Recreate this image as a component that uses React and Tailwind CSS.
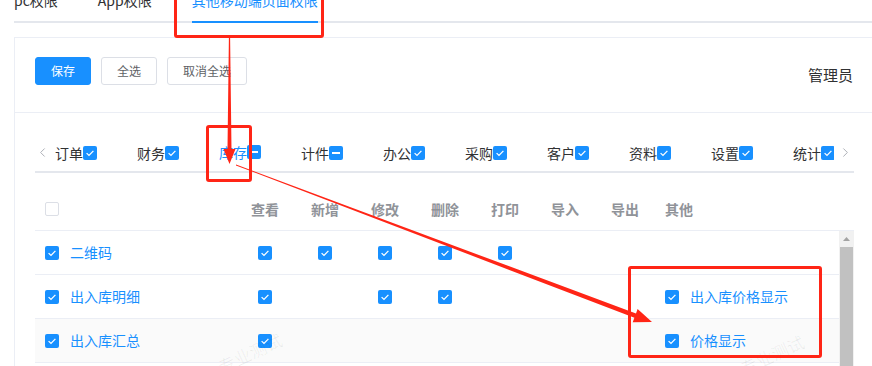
import React from 'react';
import { ChevronLeft, ChevronRight } from 'lucide-react';

const TOP_TABS = ['pc权限', 'App权限', '其他移动端页面权限'];

const MODULES = [
  { name: '订单', state: 'on' },
  { name: '财务', state: 'on' },
  { name: '库存', state: 'half', active: true },
  { name: '计件', state: 'half' },
  { name: '办公', state: 'on' },
  { name: '采购', state: 'on' },
  { name: '客户', state: 'on' },
  { name: '资料', state: 'on' },
  { name: '设置', state: 'on' },
  { name: '统计', state: 'on' },
];

const COLUMNS = ['查看', '新增', '修改', '删除', '打印', '导入', '导出'];

const ROWS = [
  { name: '二维码', perms: [1, 1, 1, 1, 1, 0, 0], extra: null },
  { name: '出入库明细', perms: [1, 0, 1, 1, 0, 0, 0], extra: '出入库价格显示' },
  { name: '出入库汇总', perms: [1, 0, 0, 0, 0, 0, 0], extra: '价格显示', striped: true },
];

function Checkbox({ state = 'on' }) {
  if (state === 'off') {
    return <span className="block w-[14px] h-[14px] rounded-[2px] border border-[#dcdfe6] bg-white shrink-0" />;
  }
  return (
    <span className="flex w-[14px] h-[14px] rounded-[2px] bg-[#1890ff] shrink-0 items-center justify-center">
      {state === 'half' ? (
        <span className="block w-[8px] h-[2px] bg-white" />
      ) : (
        <svg width="14" height="14" viewBox="0 0 14 14">
          <path d="M3.6 7.1 L6 9.4 L10.4 4.9" fill="none" stroke="white" strokeWidth="1.3" />
        </svg>
      )}
    </span>
  );
}

// tapered annotation arrow
function arrowPoints(x1, y1, x2, y2, w0, w1, hl, hw) {
  const dx = x2 - x1, dy = y2 - y1;
  const len = Math.hypot(dx, dy);
  const ux = dx / len, uy = dy / len;
  const px = -uy, py = ux;
  const bx = x2 - ux * hl, by = y2 - uy * hl;
  const pts = [
    [x1 + (px * w0) / 2, y1 + (py * w0) / 2],
    [bx + (px * w1) / 2, by + (py * w1) / 2],
    [bx + (px * hw) / 2, by + (py * hw) / 2],
    [x2, y2],
    [bx - (px * hw) / 2, by - (py * hw) / 2],
    [bx - (px * w1) / 2, by - (py * w1) / 2],
    [x1 - (px * w0) / 2, y1 - (py * w0) / 2],
  ];
  return pts.map((p) => p.map((v) => v.toFixed(1)).join(',')).join(' ');
}

export default function App() {
  return (
    <div className="relative w-[872px] h-[366px] overflow-hidden bg-white font-['Noto_Sans_CJK_SC','Noto_Sans',sans-serif]">
      {/* top tabs */}
      <div className="ml-[14px] -mt-[17px] h-[40px] flex border-b-2 border-[#e4e7ed]">
        {TOP_TABS.map((t, i) => (
          <div
            key={t}
            className={`h-[40px] leading-[35px] text-[14px] ${i === 0 ? 'pr-5' : 'px-5'} ${i === 2 ? 'text-[#1890ff]' : 'text-[#303133]'}`}
          >
            <span className={`inline-block h-[40px] ${i === 2 ? 'border-b-2 border-[#1890ff]' : ''}`}>{t}</span>
          </div>
        ))}
      </div>

      {/* card */}
      <div className="ml-[14px] mt-[14px] w-[861px] border border-[#ebeef5] bg-white">
        <div className="h-[75px] px-5 flex justify-between border-b border-[#ebeef5]">
          <div className="flex gap-[10px] mt-[19px] self-start">
            <button className="px-[15px] h-[28px] text-[12px] rounded-[3px] bg-[#1890ff] text-white border border-[#1890ff]">保存</button>
            <button className="px-[15px] h-[28px] text-[12px] rounded-[3px] bg-white text-[#606266] border border-[#dcdfe6]">全选</button>
            <button className="px-[15px] h-[28px] text-[12px] rounded-[3px] bg-white text-[#606266] border border-[#dcdfe6]">取消全选</button>
          </div>
          <div className="self-center text-[15px] text-[#303133] mr-[1px]">管理员</div>
        </div>

        <div className="pt-5 px-5">
          {/* module tabs */}
          <div className="h-[40px] flex border-b-2 border-[#e4e7ed]">
            <div className="w-[20px] flex items-center text-[#a8abb2]">
              <ChevronLeft size={15} strokeWidth={1.5} />
            </div>
            <div className="flex-1 flex overflow-hidden">
              {MODULES.map((m, i) => (
                <div key={m.name} className={`shrink-0 ${i === 0 ? 'pr-5' : 'px-5'}`}>
                  <div
                    className={`h-[40px] flex items-center ${m.active ? 'border-b-2 border-[#1890ff] text-[#1890ff]' : 'text-[#303133]'}`}
                  >
                    <span className="text-[14px]">{m.name}</span>
                    <Checkbox state={m.state} />
                  </div>
                </div>
              ))}
            </div>
            <div className="w-[20px] flex items-center justify-end text-[#a8abb2]">
              <ChevronRight size={15} strokeWidth={1.5} className="mr-[1px]" />
            </div>
          </div>

          {/* table */}
          <div className="mt-[15px]">
            <div className="h-[43px] grid grid-cols-[200px_60px_60px_60px_60px_60px_60px_60px_1fr] items-center border-b border-[#ebeef5] text-[14px] font-bold text-[#909399]">
              <div className="pl-[10px]">
                <Checkbox state="off" />
              </div>
              {COLUMNS.map((c) => (
                <div key={c} className="text-center">{c}</div>
              ))}
              <div className="pl-[10px]">其他</div>
            </div>

            <div className="flex">
              <div className="flex-1">
                {ROWS.map((r) => (
                  <div
                    key={r.name}
                    className={`h-[44px] grid grid-cols-[200px_60px_60px_60px_60px_60px_60px_60px_1fr] items-center border-b border-[#ebeef5] text-[14px] ${r.striped ? 'bg-[#fafafa]' : ''}`}
                  >
                    <div className="pl-[10px] flex items-center gap-[11px]">
                      <Checkbox />
                      <span className="text-[#1890ff]">{r.name}</span>
                    </div>
                    {r.perms.map((p, i) => (
                      <div key={i} className="flex justify-center">
                        {p ? <Checkbox /> : null}
                      </div>
                    ))}
                    <div className="pl-[10px] flex items-center gap-[11px]">
                      {r.extra && (
                        <>
                          <Checkbox />
                          <span className="text-[#1890ff]">{r.extra}</span>
                        </>
                      )}
                    </div>
                  </div>
                ))}
              </div>
              {/* scrollbar */}
              <div className="w-[15px] h-[140px] bg-[#f1f1f1] flex flex-col items-center">
                <svg width="15" height="16" viewBox="0 0 15 16" className="shrink-0">
                  <path d="M4 10 L7.5 6 L11 10 Z" fill="#a3a3a3" />
                </svg>
                <div className="w-[13px] flex-1 bg-[#c1c1c1]" />
              </div>
            </div>
          </div>
        </div>
      </div>

      {/* watermarks */}
      <div className="absolute left-[216px] top-[340px] -rotate-[25deg] text-[17px] text-black/[0.06] pointer-events-none">专业测试</div>
      <div className="absolute left-[738px] top-[342px] -rotate-[25deg] text-[17px] text-black/[0.06] pointer-events-none">专业测试</div>

      {/* red annotations */}
      <div className="absolute left-[174px] top-[-4px] w-[150px] h-[42px] border-[3px] border-[#ff2516] rounded-[3px] pointer-events-none" />
      <div className="absolute left-[206px] top-[125px] w-[46px] h-[57px] border-[3px] border-[#ff2516] rounded-[3px] pointer-events-none" />
      <div className="absolute left-[628px] top-[266px] w-[194px] h-[92px] border-[3px] border-[#ff2516] rounded-[3px] pointer-events-none" />
      <svg className="absolute left-0 top-0 pointer-events-none" width="872" height="366">
        <polygon points={arrowPoints(229.5, 37, 229.5, 164, 1.2, 4, 15, 12)} fill="#ff2516" />
        <polygon points={arrowPoints(236, 165, 652, 322, 0.8, 4.5, 18, 14)} fill="#ff2516" />
      </svg>
    </div>
  );
}
